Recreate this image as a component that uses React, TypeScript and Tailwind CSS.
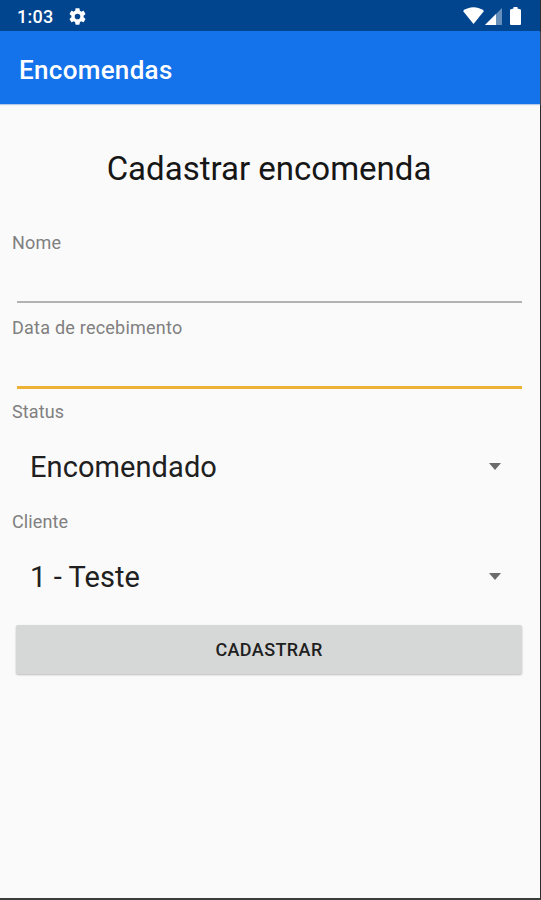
import React, { useState } from 'react';

const STATUS_OPTIONS = ['Encomendado', 'Recebido', 'Entregue'];
const CLIENTES = ['1 - Teste'];

interface SpinnerProps {
  options: string[];
}

function Spinner({ options }: SpinnerProps) {
  const [index, setIndex] = useState(0);

  return (
    <button
      type="button"
      onClick={() => setIndex((index + 1) % options.length)}
      className="flex h-[66px] w-full items-center justify-between pr-[39px] pb-[2px] pl-[30px] text-left"
    >
      <span className="text-[29px] leading-none tracking-[0.08px] text-[#202020]">{options[index]}</span>
      <svg viewBox="0 0 12 7" className="mb-[1px] h-[7px] w-[12px]" fill="#6b6b6b">
        <path d="M0 0h12L6 7z" />
      </svg>
    </button>
  );
}

function StatusBar() {
  return (
    <div className="flex h-[31px] items-center bg-[#01458f] pr-[19px] pl-[17px] text-white">
      <span className="mt-[2px] text-[18px] leading-none font-medium tracking-[0.3px]">1:03</span>
      {/* Settings gear */}
      <svg viewBox="2 2 20 20" className="mt-[1px] ml-[15px] h-[17px] w-[17px]" fill="currentColor">
        <path d="M19.14 12.94c.04-.3.06-.61.06-.94s-.02-.64-.07-.94l2.03-1.58c.18-.14.23-.41.12-.61l-1.92-3.32c-.12-.22-.37-.29-.59-.22l-2.39.96c-.5-.38-1.03-.7-1.62-.94l-.36-2.54c-.04-.24-.24-.41-.48-.41h-3.84c-.24 0-.43.17-.47.41l-.36 2.54c-.59.24-1.13.57-1.62.94l-2.39-.96c-.22-.08-.47 0-.59.22L2.74 8.87c-.12.21-.08.47.12.61l2.03 1.58c-.05.3-.09.63-.09.94s.02.64.07.94l-2.03 1.58c-.18.14-.23.41-.12.61l1.92 3.32c.12.22.37.29.59.22l2.39-.96c.5.38 1.03.7 1.62.94l.36 2.54c.05.24.24.41.48.41h3.84c.24 0 .44-.17.47-.41l.36-2.54c.59-.24 1.13-.56 1.62-.94l2.39.96c.22.08.47 0 .59-.22l1.92-3.32c.12-.22.07-.47-.12-.61l-2.01-1.58zM12 15.3A3.3 3.3 0 1 1 12 8.7a3.3 3.3 0 0 1 0 6.6z" />
      </svg>
      {/* Wifi, signal and battery */}
      <svg viewBox="0 0 21 17" className="ml-auto h-[17px] w-[21px]" fill="currentColor">
        <path d="M0 4C6-1 15-1 21 4L10.5 17z" />
      </svg>
      <svg viewBox="0 0 17 17" className="mt-[1px] ml-[1px] h-[17px] w-[17px]" fill="currentColor">
        <path d="M0 17L17 0v17z" opacity="0.4" />
        <path d="M0 17L11 6v11z" />
      </svg>
      <svg viewBox="0 0 11 18" className="ml-[8px] h-[18px] w-[11px]" fill="currentColor">
        <path d="M3.5 0h4v1.5L10 2.3a1 1 0 0 1 1 1V17a1 1 0 0 1-1 1H1a1 1 0 0 1-1-1V3.300a1 1 0 0 1 1-1l2.500-.8z" />
      </svg>
    </div>
  );
}

export default function App() {
  const [nome, setNome] = useState('');
  const [data, setData] = useState('');

  return (
    <div className="flex h-[900px] w-[541px] flex-col border-r border-b-2 border-r-[#2c2c2c] border-b-[#3c3c3c] bg-[#fafafa] font-['Roboto',sans-serif]">
      <StatusBar />

      {/* App bar */}
      <header className="flex h-[73px] shrink-0 items-center bg-[#1473eb] pl-[19px] shadow-[0_1px_1px_#b5c9e8]">
        <h1 className="mt-[4px] text-[26px] leading-none font-medium tracking-[0.3px] text-white">Encomendas</h1>
      </header>

      <main className="flex flex-col">
        <h2 className="mt-[48px] pr-[2px] text-center text-[33px] leading-[34px] text-[#161616]">Cadastrar encomenda</h2>

        <label className="mt-[47px] flex flex-col pr-[18px] pl-[12px] text-[#808080]">
          <span className="text-[18px] leading-[20px] tracking-[0.2px]">Nome</span>
          <input
            value={nome}
            onChange={(e) => setNome(e.target.value)}
            className="ml-[5px] h-[50px] border-b-2 border-[#b2b2b2] text-[24px] text-[#202020] outline-none"
          />
        </label>

        <label className="mt-[15px] flex flex-col pr-[18px] pl-[12px] text-[#808080]">
          <span className="text-[18px] leading-[20px] tracking-[0.23px]">Data de recebimento</span>
          <input
            value={data}
            onChange={(e) => setData(e.target.value)}
            className="ml-[5px] h-[51px] border-b-[3px] border-[#edb135] text-[24px] text-[#202020] outline-none"
          />
        </label>

        <span className="mt-[13px] pl-[12px] text-[18px] leading-[20px] tracking-[0.1px] text-[#808080]">Status</span>
        <div className="mt-[13px]">
          <Spinner options={STATUS_OPTIONS} />
        </div>

        <span className="mt-[11px] pl-[12px] text-[18px] leading-[20px] tracking-[0.1px] text-[#808080]">Cliente</span>
        <div className="mt-[13px]">
          <Spinner options={CLIENTES} />
        </div>

        <button
          type="button"
          className="mt-[14px] mr-[18px] ml-[16px] h-[49px] rounded-[2px] bg-[#d6d7d7] text-[18px] font-medium tracking-[0.4px] text-[#1f1f1f] shadow-[0_1px_2px_#bbbbbb]"
        >
          CADASTRAR
        </button>
      </main>
    </div>
  );
}
